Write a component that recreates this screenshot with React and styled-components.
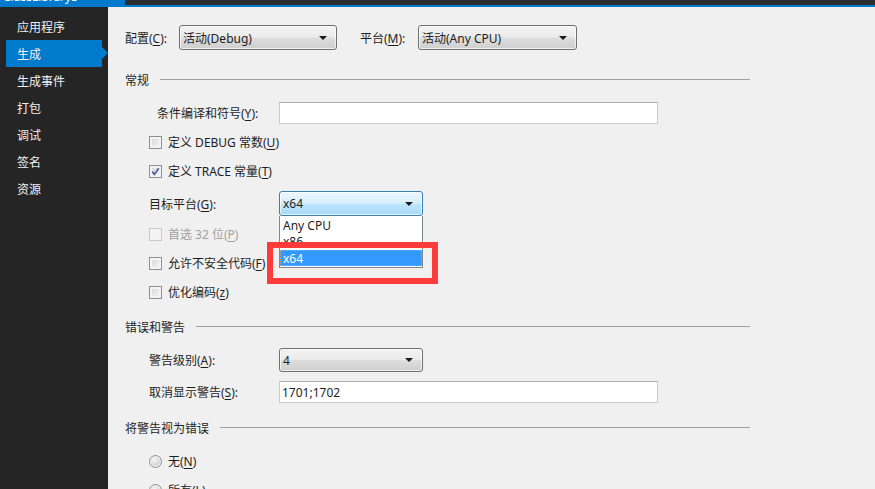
import React from "react";
import styled, { createGlobalStyle } from "styled-components";

const Global = createGlobalStyle`
  html, body {
    margin: 0;
    padding: 0;
    background: #f0f0f0;
  }
  body {
    font-family: "Noto Sans", "Noto Sans CJK SC", sans-serif;
    font-size: 12px;
    color: #1e1e1e;
  }
`;

const Window = styled.div`
  width: 875px;
  height: 489px;
  display: flex;
  flex-direction: column;
  overflow: hidden;
`;

const TitleStrip = styled.div`
  height: 7px;
  flex: none;
  display: flex;
  background: #2d2d30;
  box-shadow: inset 0 -2px 0 #007acc;
`;

const DocTab = styled.div`
  width: 125px;
  height: 7px;
  background: #007acc;
  display: flex;
  justify-content: space-between;
  overflow: hidden;
  padding: 0 8px 0 3px;
  box-sizing: border-box;
`;

const TabText = styled.span`
  color: #fff;
  font-size: 12px;
  line-height: 14px;
  margin-top: -10px;
  white-space: nowrap;
`;

const Body = styled.div`
  flex: 1;
  display: flex;
  min-height: 0;
`;

const Sidebar = styled.nav`
  width: 108px;
  flex: none;
  background: #252526;
  padding-top: 6px;
  box-sizing: border-box;
  font-family: "Noto Sans CJK SC", sans-serif;
`;

const NavItem = styled.div`
  position: relative;
  height: 27px;
  margin: 0 6px;
  padding-left: 11px;
  display: flex;
  align-items: center;
  color: #f1f1f1;
  font-size: 12px;
  background: ${(p) => (p.$active ? "#007acc" : "transparent")};
  &::after {
    content: "";
    display: ${(p) => (p.$active ? "block" : "none")};
    position: absolute;
    right: -6px;
    top: 7px;
    border-top: 6.5px solid transparent;
    border-bottom: 6.5px solid transparent;
    border-left: 6px solid #007acc;
  }
`;

const Content = styled.main`
  flex: 1;
  background: #f0f0f0;
  padding-top: 18px;
  display: flex;
  flex-direction: column;
`;

const ConfigBar = styled.div`
  height: 25px;
  padding-left: 17px;
  display: flex;
  align-items: center;
`;

const BarLabel = styled.span`
  width: ${(p) => p.$w}px;
  flex: none;
  white-space: nowrap;
`;

const Combo = styled.div`
  position: relative;
  width: ${(p) => p.$w}px;
  height: ${(p) => p.$h || 25}px;
  box-sizing: border-box;
  flex: none;
  margin-right: ${(p) => p.$mr || 0}px;
  border: 1px solid ${(p) => (p.$focused ? "#3c7fb1" : "#707070")};
  border-radius: 3px;
  background: ${(p) =>
    p.$focused
      ? "linear-gradient(#eaf6fd 0%, #d9f0fc 48%, #bee6fd 52%, #a7d9f5 100%)"
      : "linear-gradient(#f2f2f2 0%, #ebebeb 48%, #dddddd 52%, #cfcfcf 100%)"};
  box-shadow: inset 0 0 0 1px rgba(255, 255, 255, 0.7);
  display: flex;
  align-items: center;
  justify-content: space-between;
  padding: 0 9px 0 3px;
  white-space: nowrap;
`;

const Caret = styled.span`
  width: 0;
  height: 0;
  border-left: 4px solid transparent;
  border-right: 4px solid transparent;
  border-top: 4px solid #1a1a1a;
`;

const Rule = styled.div`
  height: 1px;
  background: #a0a0a0;
  margin: 15px 0 0 15px;
`;

const Sections = styled.div`
  margin-left: 17px;
  width: 625px;
  display: flex;
  flex-direction: column;
`;

const SectionHead = styled.div`
  height: 16px;
  margin-top: ${(p) => p.$gap}px;
  display: flex;
  align-items: center;
  gap: 11px;
  font-family: "Noto Sans CJK SC", sans-serif;
`;

const HeadLine = styled.span`
  flex: 1;
  height: 1px;
  background: #a0a0a0;
`;

const Row = styled.div`
  position: relative;
  height: ${(p) => p.$h}px;
  margin-top: ${(p) => p.$gap}px;
  padding-left: 24px;
  display: flex;
  align-items: center;
  color: ${(p) => (p.$disabled ? "#a0a0a0" : "#1e1e1e")};
`;

const FieldLabel = styled.span`
  width: 130px;
  flex: none;
  padding-left: ${(p) => p.$indent || 0}px;
  box-sizing: border-box;
  white-space: nowrap;
`;

const TextBox = styled.div`
  width: ${(p) => p.$w}px;
  height: 22px;
  box-sizing: border-box;
  background: #fff;
  border: 1px solid #c9cbd1;
  border-top-color: #abadb3;
  display: flex;
  align-items: center;
  padding-left: 2px;
`;

const Box = styled.span`
  width: 13px;
  height: 13px;
  box-sizing: border-box;
  flex: none;
  margin-right: 6px;
  border: 1px solid ${(p) => (p.$disabled ? "#c8c8c8" : "#8e8f8f")};
  background: ${(p) =>
    p.$disabled ? "#f4f4f4" : "linear-gradient(135deg, #d4d4d4, #f7f7f7)"};
  box-shadow: inset 0 0 0 2px #f4f4f4;
  display: flex;
  align-items: center;
  justify-content: center;
`;

const Radio = styled.span`
  width: 13px;
  height: 13px;
  box-sizing: border-box;
  flex: none;
  margin-right: 6px;
  border-radius: 50%;
  border: 1px solid #8e8f8f;
  background: radial-gradient(circle at 40% 35%, #f6f6f6, #cfcfcf 70%);
  box-shadow: inset 0 0 0 1px #f4f4f4;
`;

const Key = styled.span`
  text-decoration: underline;
  text-underline-offset: 2px;
`;

const DropList = styled.div`
  position: absolute;
  left: 0;
  top: 100%;
  width: 144px;
  box-sizing: border-box;
  background: #fff;
  border: 1px solid #828790;
  border-top: none;
  padding: 1px 0 1px;
`;

const DropItem = styled.div`
  height: 16px;
  display: flex;
  align-items: center;
  padding-left: 3px;
  box-sizing: border-box;
  color: ${(p) => (p.$selected ? "#fff" : "#1e1e1e")};
  background: ${(p) => (p.$selected ? "#3399ff" : "transparent")};
  outline: ${(p) => (p.$selected ? "1px dotted #e0a060" : "none")};
  outline-offset: -1px;
  margin-top: ${(p) => (p.$selected ? 1 : 0)}px;
`;

const Callout = styled.div`
  position: absolute;
  left: -12px;
  top: 51px;
  width: 171px;
  height: 42px;
  box-sizing: border-box;
  border: 6px solid #fe3b3b;
  pointer-events: none;
`;

const ControlSpot = styled.div`
  position: relative;
`;

const Check = () => (
  <svg width="9" height="9" viewBox="0 0 9 9">
    <path d="M1.2 4.6 L3.4 7.4 L7.8 1.2" fill="none" stroke="#4a5f97" strokeWidth="1.7" />
  </svg>
);

const navItems = ["应用程序", "生成", "生成事件", "打包", "调试", "签名", "资源"];

export default function App() {
  return (
    <Window>
      <Global />
      <TitleStrip>
        <DocTab>
          <TabText>ClassLibrary3</TabText>
          <TabText>✕</TabText>
        </DocTab>
      </TitleStrip>
      <Body>
        <Sidebar>
          {navItems.map((n) => (
            <NavItem key={n} $active={n === "生成"}>
              {n}
            </NavItem>
          ))}
        </Sidebar>
        <Content>
          <ConfigBar>
            <BarLabel $w={54}>
              配置(<Key>C</Key>):
            </BarLabel>
            <Combo $w={158} $mr={23}>
              <span>活动(Debug)</span>
              <Caret />
            </Combo>
            <BarLabel $w={58}>
              平台(<Key>M</Key>):
            </BarLabel>
            <Combo $w={159}>
              <span>活动(Any CPU)</span>
              <Caret />
            </Combo>
          </ConfigBar>
          <Rule />
          <Sections>
            <SectionHead $gap={6}>
              <span>常规</span>
              <HeadLine />
            </SectionHead>
            <Row $h={22} $gap={15}>
              <FieldLabel $indent={8}>
                条件编译和符号(<Key>Y</Key>):
              </FieldLabel>
              <TextBox $w={379} />
            </Row>
            <Row $h={16} $gap={10}>
              <Box />
              定义 DEBUG 常数(<Key>U</Key>)
            </Row>
            <Row $h={16} $gap={13}>
              <Box>
                <Check />
              </Box>
              定义 TRACE 常量(<Key>T</Key>)
            </Row>
            <Row $h={25} $gap={12} style={{ zIndex: 2 }}>
              <FieldLabel>
                目标平台(<Key>G</Key>):
              </FieldLabel>
              <ControlSpot>
                <Combo $w={144} $focused>
                  <span>x64</span>
                  <Caret />
                </Combo>
                <DropList>
                  <DropItem>Any CPU</DropItem>
                  <DropItem>x86</DropItem>
                  <DropItem $selected>x64</DropItem>
                </DropList>
                <Callout />
              </ControlSpot>
            </Row>
            <Row $h={16} $gap={10} $disabled>
              <Box $disabled />
              首选 32 位(<Key>P</Key>)
            </Row>
            <Row $h={16} $gap={13}>
              <Box />
              允许不安全代码(<Key>F</Key>)
            </Row>
            <Row $h={16} $gap={13}>
              <Box />
              优化编码(<Key>z</Key>)
            </Row>
            <SectionHead $gap={18}>
              <span>错误和警告</span>
              <HeadLine />
            </SectionHead>
            <Row $h={24} $gap={14}>
              <FieldLabel>
                警告级别(<Key>A</Key>):
              </FieldLabel>
              <Combo $w={144} $h={24}>
                <span>4</span>
                <Caret />
              </Combo>
            </Row>
            <Row $h={22} $gap={9}>
              <FieldLabel>
                取消显示警告(<Key>S</Key>):
              </FieldLabel>
              <TextBox $w={379}>1701;1702</TextBox>
            </Row>
            <SectionHead $gap={16}>
              <span>将警告视为错误</span>
              <HeadLine />
            </SectionHead>
            <Row $h={16} $gap={18}>
              <Radio />
              无(<Key>N</Key>)
            </Row>
            <Row $h={16} $gap={13}>
              <Radio />
              所有(<Key>L</Key>)
            </Row>
          </Sections>
        </Content>
      </Body>
    </Window>
  );
}
